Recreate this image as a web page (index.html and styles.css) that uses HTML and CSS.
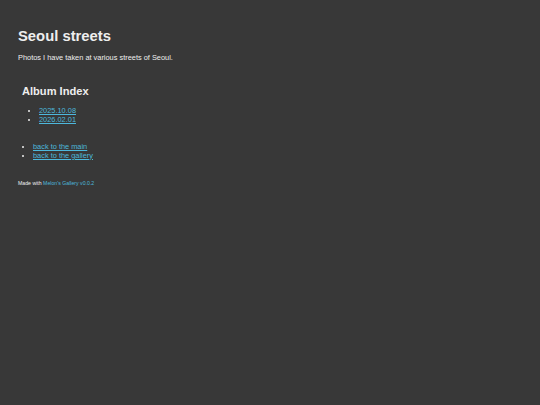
FILE: index.html
```html
<!DOCTYPE html>
<html lang="en">
<head>
<meta charset="utf-8">
<title>Seoul streets</title>
<link rel="stylesheet" href="styles.css">
</head>
<body>
<main class="page">
  <h1 class="title">Seoul streets</h1>
  <p class="desc">Photos I have taken at various streets of Seoul.</p>
  <section class="albums">
    <h2 class="albums-title">Album Index</h2>
    <ul class="album-list">
      <li><a href="#">2025.10.08</a></li>
      <li><a href="#">2026.02.01</a></li>
    </ul>
  </section>
  <ul class="nav-list">
    <li><a href="#">back to the main</a></li>
    <li><a href="#">back to the gallery</a></li>
  </ul>
  <footer class="footer">Made with <a href="#">Melon's Gallery v0.0.2</a></footer>
</main>
</body>
</html>
```

FILE: styles.css
```css
html, body {
  margin: 0;
  padding: 0;
  background: #383838;
}
body {
  color: #eeeeee;
  font-family: "Liberation Sans", Arial, sans-serif;
  font-size: 7.4px;
  line-height: 8.5px;
}
a {
  color: #4db8dc;
  text-decoration: underline;
}
.page {
  padding: 28px 18px 0 18px;
}
.title {
  margin: 0;
  font-size: 14.8px;
  line-height: 17px;
  font-weight: bold;
}
.desc {
  margin: 9px 0 0 0;
}
.albums {
  margin: 22px 0 0 4px;
}
.albums-title {
  margin: 0;
  font-size: 11.1px;
  line-height: 12.8px;
  font-weight: bold;
}
.album-list {
  margin: 8.7px 0 0 0;
  padding-left: 17px;
  line-height: 9px;
}
.nav-list {
  margin: 17.7px 0 0 0;
  padding-left: 15px;
  line-height: 9px;
}
.footer {
  margin-top: 20px;
  font-size: 5.2px;
  line-height: 6.5px;
}
```
